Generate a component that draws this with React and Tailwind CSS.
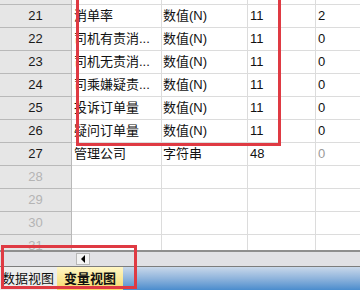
import React from 'react';

const rows = [
  { n: 20, name: '司机取消率', type: '数值(N)', w: '11', d: '2' },
  { n: 21, name: '消单率', type: '数值(N)', w: '11', d: '2' },
  { n: 22, name: '司机有责消...', type: '数值(N)', w: '11', d: '0' },
  { n: 23, name: '司机无责消...', type: '数值(N)', w: '11', d: '0' },
  { n: 24, name: '司乘嫌疑责...', type: '数值(N)', w: '11', d: '0' },
  { n: 25, name: '投诉订单量', type: '数值(N)', w: '11', d: '0' },
  { n: 26, name: '疑问订单量', type: '数值(N)', w: '11', d: '0' },
  { n: 27, name: '管理公司', type: '字符串', w: '48', d: '0', dim: true },
  { n: 28 },
  { n: 29 },
  { n: 30 },
  { n: 31 },
];

const cjk = { fontFamily: '"Liberation Sans", "Noto Sans CJK SC", sans-serif' };

function Row({ r }) {
  const empty = !r.name;
  return (
    <div className="flex h-[23px] shrink-0">
      <div
        className={`w-[72px] shrink-0 flex items-center justify-center bg-[#e6e6e6] border-r border-b border-[#b9b9b9] text-[13px] ${
          empty ? 'text-[#b4b4b4]' : 'text-[#1a1a1a]'
        }`}
      >
        {r.n}
      </div>
      <div className="w-[90px] shrink-0 flex items-center pl-[2px] border-r border-b border-[#dcdcdc] text-[13px] text-[#111] whitespace-nowrap overflow-hidden">
        {r.name}
      </div>
      <div className="w-[86px] shrink-0 flex items-center pl-[1px] border-r border-b border-[#dcdcdc] text-[13px] text-[#111]">
        {r.type}
      </div>
      <div className="w-[68px] shrink-0 flex items-center pl-[2px] border-r border-b border-[#dcdcdc] text-[13px] text-[#111]">
        {r.w}
      </div>
      <div
        className={`flex-1 flex items-center pl-[2px] border-b border-[#dcdcdc] text-[13px] ${
          r.dim ? 'text-[#9a9a9a]' : 'text-[#111]'
        }`}
      >
        {r.d}
      </div>
    </div>
  );
}

export default function App() {
  return (
    <div className="relative w-[360px] h-[290px] overflow-hidden bg-white" style={cjk}>
      <div className="h-[250px] overflow-hidden">
        <div className="flex flex-col -mt-[18px]">
          {rows.map((r) => (
            <Row key={r.n} r={r} />
          ))}
        </div>
      </div>

      {/* horizontal scrollbar */}
      <div className="h-[16px] flex bg-[#e1e1e5] border-t-2 border-[#8e8e8e]">
        <div className="w-[76px] shrink-0" />
        <div className="w-[14px] h-[12px] mt-[1px] shrink-0 flex items-center justify-center bg-[#f3f3f3] border border-[#b8b8b8]">
          <div className="w-0 h-0 border-y-[4px] border-y-transparent border-r-[4px] border-r-black" />
        </div>
        <div className="flex-1" />
      </div>

      {/* sheet tabs */}
      <div className="h-[24px] flex border-t border-[#7d7d7d] bg-gradient-to-b from-[#c9d8ea] via-[#8fb4dc] to-[#4a8ccd]">
        <div className="w-[57px] shrink-0 flex items-center pl-[2px] bg-[#ededed] text-[13px] text-[#111]">
          数据视图
        </div>
        <div className="w-[66px] shrink-0 flex items-center justify-center bg-gradient-to-b from-[#fff6c4] to-[#f6d966] text-[13px] font-bold text-[#111]">
          变量视图
        </div>
        <div className="flex-1" />
      </div>
      <div className="h-[1px] bg-[#e8f0f8]" />

      {/* red annotation boxes */}
      <div className="absolute left-[76px] top-[-4px] w-[205px] h-[150px] border-[3px] border-[#df3a43]" />
      <div className="absolute left-[1px] top-[245px] w-[136px] h-[44px] border-[3px] border-[#df3a43]" />
    </div>
  );
}
